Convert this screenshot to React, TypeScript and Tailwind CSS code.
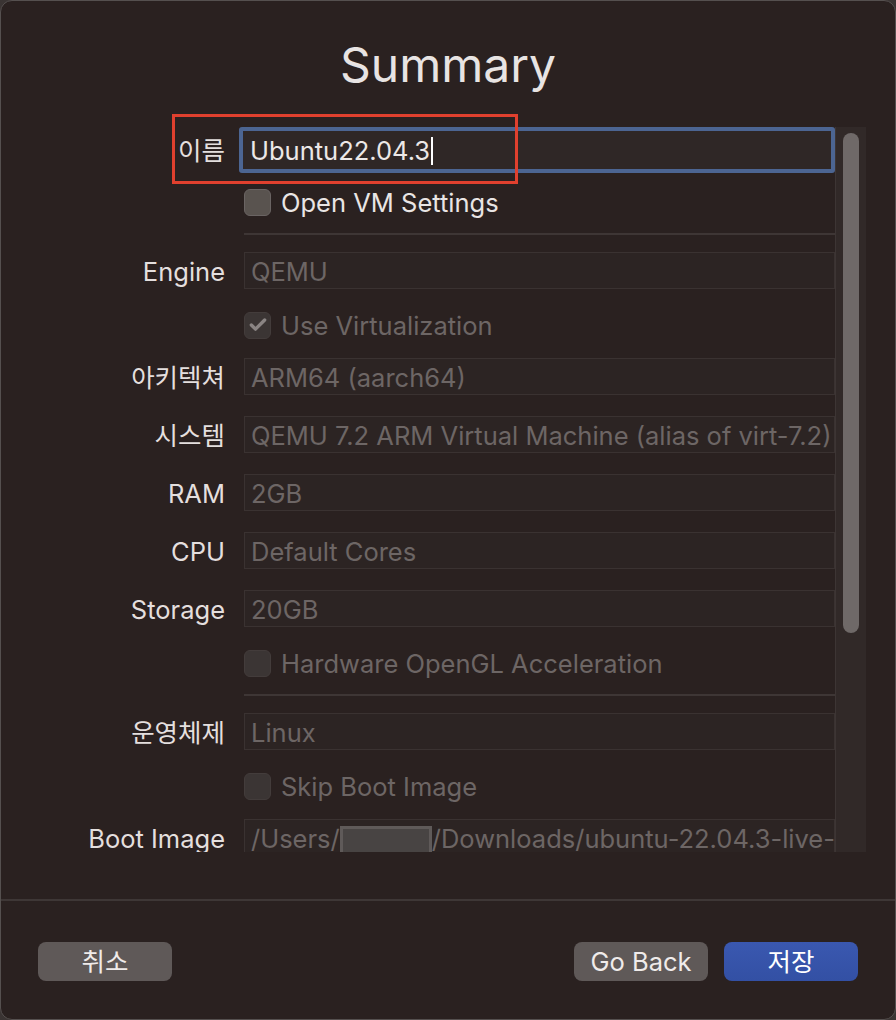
import { Check } from "lucide-react";

const FONT = "font-['Inter','Noto_Sans_CJK_KR',sans-serif]";

function Label({ text }: { text: string }) {
  return <div className="text-right text-[25.5px] text-[#e4dfde] leading-none pt-[2px]">{text}</div>;
}

function Field({ value }: { value: string }) {
  return (
    <div className="h-[37px] border border-[#3a3231] bg-[#2c2423] flex items-center px-[6px] pt-[3px] text-[25.5px] text-[#6d6665] whitespace-nowrap overflow-hidden">
      {value}
    </div>
  );
}

function CheckRow({ label, checked, active }: { label: string; checked?: boolean; active?: boolean }) {
  return (
    <div className="flex items-center gap-[10px] h-[28px]">
      <div
        className={`w-[27px] h-[27px] rounded-[6px] flex items-center justify-center ${
          active ? "bg-[#59534f] border border-[#6a6463]" : "bg-[#3b3534] border border-[#433c3b]"
        }`}
      >
        {checked && <Check className="w-[20px] h-[20px] text-[#8a8483]" strokeWidth={4} />}
      </div>
      <span className={`text-[25.5px] leading-none pt-[2px] ${active ? "text-[#e9e5e4]" : "text-[#6d6665]"}`}>{label}</span>
    </div>
  );
}

function Row({ label, children, className = "" }: { label?: string; children: React.ReactNode; className?: string }) {
  return (
    <div className={`grid grid-cols-[224px_1fr] gap-x-[19px] items-center ${className}`}>
      <Label text={label ?? ""} />
      {children}
    </div>
  );
}

function Sep({ className = "" }: { className?: string }) {
  return (
    <div className={`grid grid-cols-[224px_1fr] gap-x-[19px] ${className}`}>
      <div />
      <div className="h-[2px] bg-[#3e3635]" />
    </div>
  );
}

export default function App() {
  return (
    <div className={`w-[896px] h-[1020px] bg-[#3a3433] ${FONT}`}>
      <div className="w-full h-full bg-[#2a2120] rounded-[12px] border border-[#55504f] flex flex-col overflow-hidden">
        <h1 className="text-center text-[48px] leading-none text-[#e8e4e3] pt-[40px] h-[126px]">Summary</h1>

        <div className="flex h-[725px]">
          <div className="flex-1 overflow-hidden">
            {/* name */}
            <div className="grid grid-cols-[224px_1fr] gap-x-[14px] items-center">
              <Label text="이름" />
              <div className="h-[46px] border-[4px] border-[#4c6592] rounded-[3px] bg-[#2f2726] flex items-center px-[7px] pt-[2px] text-[25.5px] text-[#ece8e7]">
                Ubuntu22.04.3
                <span className="inline-block w-[2px] h-[28px] bg-white ml-[1px]" />
              </div>
            </div>
            <Row className="mt-[15px]">
              <CheckRow label="Open VM Settings" active />
            </Row>
            <Sep className="mt-[17px]" />
            <Row label="Engine" className="mt-[17px]">
              <Field value="QEMU" />
            </Row>
            <Row className="mt-[22px]">
              <CheckRow label="Use Virtualization" checked />
            </Row>
            <Row label="아키텍쳐" className="mt-[19px]">
              <Field value="ARM64 (aarch64)" />
            </Row>
            <Row label="시스템" className="mt-[21px]">
              <Field value="QEMU 7.2 ARM Virtual Machine (alias of virt-7.2)" />
            </Row>
            <Row label="RAM" className="mt-[21px]">
              <Field value="2GB" />
            </Row>
            <Row label="CPU" className="mt-[21px]">
              <Field value="Default Cores" />
            </Row>
            <Row label="Storage" className="mt-[21px]">
              <Field value="20GB" />
            </Row>
            <Row className="mt-[22px]">
              <CheckRow label="Hardware OpenGL Acceleration" />
            </Row>
            <Sep className="mt-[17px]" />
            <Row label="운영체제" className="mt-[17px]">
              <Field value="Linux" />
            </Row>
            <Row className="mt-[22px]">
              <CheckRow label="Skip Boot Image" />
            </Row>
            <Row label="Boot Image" className="mt-[19px]">
              <div className="h-[37px] border border-[#3a3231] bg-[#2c2423] flex items-center px-[6px] pt-[3px] text-[25.5px] text-[#6d6665] whitespace-nowrap overflow-hidden">
                /Users/
                <span className="inline-block w-[92px] h-[32px] bg-[#484443] border-[3px] border-[#5f5a59] mt-[6px] shrink-0" />
                <span className="text-[#6d6665]">/Downloads/ubuntu-22.04.3-live-</span>
              </div>
            </Row>
          </div>

          {/* scrollbar */}
          <div className="w-[31px] h-[725px] bg-[#312928] border-l border-[#3d3534] flex justify-center pt-[6px] shrink-0">
            <div className="w-[16px] h-[500px] rounded-full bg-[#6f6968]" />
          </div>
          <div className="w-[29px] shrink-0" />
        </div>

        <div className="mt-[47px] h-[2px] bg-[#3e3736]" />

        <div className="flex items-center px-[37px] mt-[41px]">
          <button className="w-[134px] h-[39px] rounded-[8px] bg-[#5f5958] text-[25.5px] text-[#efebea] leading-none">
            취소
          </button>
          <div className="flex-1" />
          <button className="w-[134px] h-[39px] rounded-[8px] bg-[#5f5958] text-[25.5px] text-[#efebea] leading-none">
            Go Back
          </button>
          <button className="ml-[16px] w-[134px] h-[39px] rounded-[8px] bg-gradient-to-b from-[#3a58b0] to-[#3350a4] text-[25.5px] text-white leading-none">
            저장
          </button>
        </div>
      </div>

      {/* annotation */}
      <div className="absolute left-[172px] top-[114px] w-[346px] h-[70px] border-[3px] border-[#e0402e]" />
    </div>
  );
}
